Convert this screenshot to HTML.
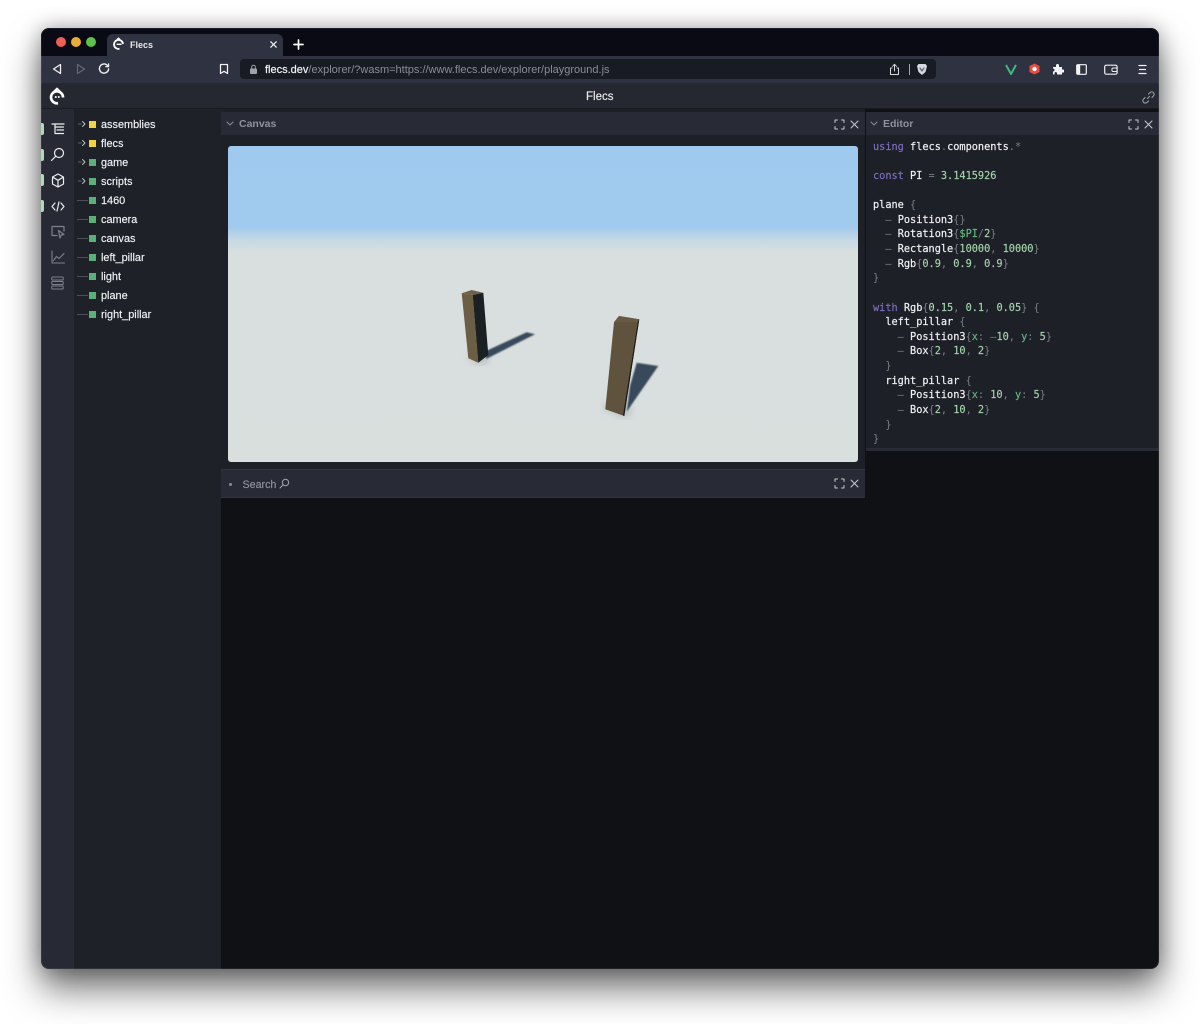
<!DOCTYPE html>
<html><head><meta charset="utf-8"><title>Flecs</title>
<style>
html,body{margin:0;padding:0;width:1200px;height:1024px;overflow:hidden;background:#fff;font-family:"Liberation Sans",sans-serif}
div,span,svg{position:absolute;box-sizing:border-box}
i{font-style:normal}
#win{left:41px;top:28px;width:1118px;height:941px;border-radius:8px;overflow:hidden;background:#101114;}
#shadow{left:41px;top:28px;width:1118px;height:941px;border-radius:8px;box-shadow:0 20px 36px rgba(0,0,0,.55),0 0 20px rgba(0,0,0,.3)}
.t{white-space:nowrap;line-height:14px}
.row{font-size:10.9px;color:#f2f3f5;left:60px;white-space:nowrap;line-height:14px;-webkit-text-stroke:.15px #f2f3f5}
.sq{width:7px;height:7px;left:48px;background:#5bb077}
.sq.y{background:#f4d23f}
.ln{left:36px;width:11px;height:1px;background:#4c4f57}
.code{font-family:"DejaVu Sans Mono","Liberation Mono",monospace;font-size:10.25px;line-height:14.63px;color:#7b7f89;white-space:pre}
.w{color:#f0f1f3;-webkit-text-stroke:.2px #f0f1f3}.p{color:#7f6fc0;-webkit-text-stroke:.15px #7f6fc0}.n{color:#a6d6ae;-webkit-text-stroke:.15px #a6d6ae}.g{color:#63b97d;-webkit-text-stroke:.15px #63b97d}
svg{fill:none;stroke-linecap:round;stroke-linejoin:round}
</style></head><body>
<div id="shadow"></div>
<div id="win">
 <!-- tab strip -->
 <div style="left:0;top:0;width:1118px;height:28px;background:#0a0a15"></div>
 <div style="left:15px;top:9px;width:10px;height:10px;border-radius:5px;background:#ed5f57"></div>
 <div style="left:29.500px;top:9px;width:10px;height:10px;border-radius:5px;background:#e8ac3a"></div>
 <div style="left:44.500px;top:9px;width:10px;height:10px;border-radius:5px;background:#5dc24c"></div>
 <div style="left:66px;top:6px;width:176px;height:22px;background:#2f3240;border-radius:6px 6px 0 0"></div>
 <svg style="left:71px;top:9px" width="13" height="14" viewBox="0 0 13 14"><path d="M11 7A4.500 4.500 0 1 0 7.500 11.800" stroke="#fff" stroke-width="1.800" stroke-linecap="butt"/><path d="M5 7.300H9" stroke="#fff" stroke-width="1.300"/><path d="M5 2.500L6.500 1L8 2.500" stroke="#fff" stroke-width="1.200"/></svg>
 <div class="t" style="left:89px;top:9.500px;font-size:9px;font-weight:bold;color:#e8e9ec">Flecs</div>
 <svg style="left:229px;top:12.500px" width="7" height="7" viewBox="0 0 7 7"><path d="M.8 .8L6.200 6.200M6.200 .8L.8 6.200" stroke="#f2f2f4" stroke-width="1.200"/></svg>
 <svg style="left:252px;top:11px" width="11" height="11" viewBox="0 0 11 11"><path d="M5.500 1V10M1 5.500H10" stroke="#fff" stroke-width="1.700"/></svg>
 <!-- toolbar -->
 <div style="left:0;top:28px;width:1118px;height:27px;background:#2f3240"></div>
 <svg style="left:11px;top:35px" width="10" height="12" viewBox="0 0 10 12"><path d="M8.500 1.500V10.500L1.500 6Z" stroke="#f0f0f2" stroke-width="1.300"/></svg>
 <svg style="left:35px;top:35px" width="10" height="12" viewBox="0 0 10 12"><path d="M1.500 1.500V10.500L8.500 6Z" stroke="#636675" stroke-width="1.200"/></svg>
 <svg style="left:57px;top:35px" width="12" height="12" viewBox="0 0 12 12"><path d="M10 3.200A4.600 4.600 0 1 0 10.600 6" stroke="#f0f0f2" stroke-width="1.400"/><path d="M10.600 .8V3.600H7.800" stroke="#f0f0f2" stroke-width="1.200"/></svg>
 <svg style="left:178px;top:35px" width="10" height="12" viewBox="0 0 10 12"><path d="M1.500 1.500H8.500V10.500L5 8.300L1.500 10.500Z" stroke="#f0f0f2" stroke-width="1.300"/></svg>
 <div style="left:199px;top:31px;width:696px;height:20px;background:#191b24;border-radius:4px"></div>
 <svg style="left:208px;top:35.500px" width="9" height="11" viewBox="0 0 9 11"><rect x="1" y="4.500" width="7" height="5.500" rx="1" fill="#a0a2aa"/><path d="M2.700 4.500V3a1.800 1.800 0 0 1 3.600 0V4.500" stroke="#a0a2aa" stroke-width="1"/></svg>
 <div class="t" style="left:224px;top:34.500px;font-size:11px;color:#8a8d96"><span style="position:static;color:#f2f3f5;-webkit-text-stroke:.2px #f2f3f5">flecs.dev</span>/explorer/?wasm=https://www.flecs.dev/explorer/playground.js</div>
 <svg style="left:848px;top:35px" width="11" height="13" viewBox="0 0 11 13"><path d="M3 5H1.500V11.500H9.500V5H8M5.500 8V1.500M3.500 3.300L5.500 1.300L7.500 3.300" stroke="#d8d9de" stroke-width="1"/></svg>
 <div style="left:868px;top:36px;width:1px;height:11px;background:#a4a6ae"></div>
 <svg style="left:875px;top:34.500px" width="12" height="13" viewBox="0 0 12 13"><path d="M2.500 1H9.500L11 3L9.500 9L6 12L2.500 9L1 3Z" fill="#d8d9e0"/><path d="M4 5L6 8L8 5" stroke="#5d6070" stroke-width="1.200"/></svg>
 <svg style="left:964px;top:36px" width="12" height="11" viewBox="0 0 12 11"><path d="M1 1L6 10L11 1" stroke="#41b883" stroke-width="2" stroke-linecap="butt" stroke-linejoin="miter"/></svg>
 <svg style="left:988px;top:35px" width="11" height="12" viewBox="0 0 11 12"><path d="M5.500 .5L10.500 3V9L5.500 11.500L.5 9V3Z" fill="#ea4c3f"/><circle cx="5.500" cy="6" r="2.200" fill="#fff"/></svg>
 <svg style="left:1011px;top:35px" width="12" height="12" viewBox="0 0 12 12"><path d="M1 4H4V2.500A1.500 1.500 0 0 1 7 2.500V4H10V6.500H11A1.500 1.500 0 0 1 11 9.500H10V11.500H5V10A1.300 1.300 0 0 0 2.500 10V11.500H1V8.500A1.500 1.500 0 0 0 1 5.500Z" fill="#f4f4f6"/></svg>
 <svg style="left:1035px;top:36px" width="11" height="11" viewBox="0 0 11 11"><rect x=".7" y=".7" width="9.600" height="9.600" rx="1" stroke="#f4f4f6" stroke-width="1.200"/><rect x="1" y="1" width="3.200" height="9" fill="#f4f4f6"/></svg>
 <svg style="left:1063px;top:36px" width="14" height="11" viewBox="0 0 14 11"><rect x=".7" y="1.200" width="12.400" height="9" rx="1.500" stroke="#f0f0f2" stroke-width="1.200"/><rect x="8" y="4" width="5" height="3.500" rx="1" fill="#2f3240" stroke="#f0f0f2"/></svg>
 <svg style="left:1097px;top:36px" width="9" height="11" viewBox="0 0 9 11"><path d="M1 1.500H8M1.500 5.500H7.500M1 9.500H8" stroke="#f0f0f2" stroke-width="1.300"/></svg>
 <!-- app header -->
 <div style="left:0;top:55px;width:1118px;height:26px;background:#252831;border-bottom:1px solid #1a1c22"></div>
 <svg style="left:8px;top:59px" width="17" height="18" viewBox="0 0 17 18"><path d="M14 10.500A6 6 0 1 0 9 16.200" stroke="#fff" stroke-width="2.600" stroke-linecap="butt"/><path d="M5 4.500L8 1.500L11 4.500" stroke="#fff" stroke-width="1.800"/><circle cx="6.800" cy="10" r="1" fill="#fff"/><circle cx="9.800" cy="10" r="1" fill="#fff"/></svg>
 <div class="t" style="left:545px;top:61.500px;font-size:11.500px;color:#eceded;-webkit-text-stroke:.15px #eceded">Flecs</div>
 <svg style="left:1101px;top:63px" width="13" height="13" viewBox="0 0 13 13"><path d="M5.500 7.500L7.500 5.500M6.500 3L8 1.600A2.400 2.400 0 0 1 11.400 5L10 6.500M6.500 10L5 11.400A2.400 2.400 0 0 1 1.600 8L3 6.500" stroke="#9c9fa8" stroke-width="1.100"/></svg>
 <!-- sidebar -->
 <div style="left:0;top:81px;width:33px;height:860px;background:#272a34"></div>
 <div style="left:33px;top:81px;width:147px;height:860px;background:#1e2128"></div>
 <div style="left:0;top:95px;width:3px;height:12px;background:#a7dcb4;border-radius:0 2px 2px 0"></div>
 <div style="left:0;top:121px;width:3px;height:12px;background:#a7dcb4;border-radius:0 2px 2px 0"></div>
 <div style="left:0;top:146px;width:3px;height:12px;background:#a7dcb4;border-radius:0 2px 2px 0"></div>
 <div style="left:0;top:172px;width:3px;height:12px;background:#a7dcb4;border-radius:0 2px 2px 0"></div>
 <svg style="left:10px;top:94px" width="14" height="14" viewBox="0 0 14 14"><path d="M1 2H13M4 5H12.500M6 8H12.500M4 11.500H12.500M4 2V11.500" stroke="#eceded" stroke-width="1.200"/></svg>
 <svg style="left:9px;top:119px" width="15" height="15" viewBox="0 0 15 15"><circle cx="9" cy="6" r="4.500" stroke="#eceded" stroke-width="1.200"/><path d="M5.800 9.200L1.500 13.500" stroke="#eceded" stroke-width="1.200"/></svg>
 <svg style="left:10px;top:145px" width="14" height="15" viewBox="0 0 14 15"><path d="M7 1L12.500 4V11L7 14L1.500 11V4ZM1.500 4L7 7.300L12.500 4M7 7.300V14" stroke="#eceded" stroke-width="1.200"/></svg>
 <svg style="left:10px;top:173px" width="14" height="11" viewBox="0 0 14 11"><path d="M4 2L1 5.500L4 9M10 2L13 5.500L10 9M8 1L6 10" stroke="#eceded" stroke-width="1.200"/></svg>
 <svg style="left:10px;top:197px" width="14" height="14" viewBox="0 0 14 14"><path d="M6 10.500H1V1.500H13V6" stroke="#7e818a" stroke-width="1.200"/><path d="M7.500 5.500L13 9.500L10.300 10L9 13Z" stroke="#7e818a" stroke-width="1.200"/></svg>
 <svg style="left:10px;top:222px" width="14" height="14" viewBox="0 0 14 14"><path d="M1 1V13H13.500M2.500 10.500L5.500 6.500L8 8.500L13 3.500" stroke="#7e818a" stroke-width="1.100"/></svg>
 <svg style="left:10px;top:248px" width="13" height="14" viewBox="0 0 13 14"><rect x=".8" y="1" width="11.400" height="3" rx=".8" stroke="#7e818a"/><rect x=".8" y="5.500" width="11.400" height="3" rx=".8" stroke="#7e818a"/><rect x=".8" y="10" width="11.400" height="3" rx=".8" stroke="#7e818a"/></svg>
 <!-- tree -->
 <svg style="left:37px;top:92px" width="9" height="8" viewBox="0 0 9 8"><path d="M4.500 1.500L7 4L4.500 6.500" stroke="#c5c6cb" stroke-width=".9"/><path d="M0 4H3.500" stroke="#5b5e66"/></svg>
 <svg style="left:37px;top:111px" width="9" height="8" viewBox="0 0 9 8"><path d="M4.500 1.500L7 4L4.500 6.500" stroke="#c5c6cb" stroke-width=".9"/><path d="M0 4H3.500" stroke="#5b5e66"/></svg>
 <svg style="left:37px;top:130px" width="9" height="8" viewBox="0 0 9 8"><path d="M4.500 1.500L7 4L4.500 6.500" stroke="#c5c6cb" stroke-width=".9"/><path d="M0 4H3.500" stroke="#5b5e66"/></svg>
 <svg style="left:37px;top:149px" width="9" height="8" viewBox="0 0 9 8"><path d="M4.500 1.500L7 4L4.500 6.500" stroke="#c5c6cb" stroke-width=".9"/><path d="M0 4H3.500" stroke="#5b5e66"/></svg>
 <div class="sq y" style="top:93px"></div><div class="row" style="top:90px">assemblies</div>
 <div class="sq y" style="top:112px"></div><div class="row" style="top:109px">flecs</div>
 <div class="sq" style="top:131px"></div><div class="row" style="top:128px">game</div>
 <div class="sq" style="top:150px"></div><div class="row" style="top:147px">scripts</div>
 <div class="ln" style="top:172px"></div><div class="sq" style="top:169px"></div><div class="row" style="top:165.500px">1460</div>
 <div class="ln" style="top:191px"></div><div class="sq" style="top:188px"></div><div class="row" style="top:185px">camera</div>
 <div class="ln" style="top:210px"></div><div class="sq" style="top:207px"></div><div class="row" style="top:204px">canvas</div>
 <div class="ln" style="top:229px"></div><div class="sq" style="top:226px"></div><div class="row" style="top:223px">left_pillar</div>
 <div class="ln" style="top:248px"></div><div class="sq" style="top:245px"></div><div class="row" style="top:242px">light</div>
 <div class="ln" style="top:267px"></div><div class="sq" style="top:264px"></div><div class="row" style="top:261px">plane</div>
 <div class="ln" style="top:286px"></div><div class="sq" style="top:283px"></div><div class="row" style="top:280px">right_pillar</div>
 <!-- canvas panel -->
 <div style="left:180px;top:81px;width:644px;height:364px;background:#1e2027"></div>
 <div style="left:180px;top:84px;width:644px;height:23px;background:#282b35"></div>
 <svg style="left:185px;top:93px" width="8" height="6" viewBox="0 0 8 6"><path d="M1 1L4 4L7 1" stroke="#8c8f98"/></svg>
 <div class="t" style="left:198px;top:89px;font-size:10.500px;font-weight:bold;color:#8f929b">Canvas</div>
 <svg style="left:793px;top:90.500px" width="11" height="11" viewBox="0 0 11 11"><path d="M1 3.500V1H3.500M7.500 1H10V3.500M10 7.500V10H7.500M3.500 10H1V7.500" stroke="#c9cad0"/></svg>
 <svg style="left:809px;top:91.500px" width="9" height="9" viewBox="0 0 9 9"><path d="M1 1L8 8M8 1L1 8" stroke="#c9cad0"/></svg>
 <svg style="left:187px;top:118px;border-radius:3px" width="630" height="316" viewBox="0 0 630 316">
  <defs>
   <linearGradient id="bg" x1="0" y1="0" x2="0" y2="1"><stop offset="0" stop-color="#9fc9ef"/><stop offset=".255" stop-color="#a0caee"/><stop offset=".295" stop-color="#c4d8e4"/><stop offset=".335" stop-color="#d9dfdf"/><stop offset="1" stop-color="#d9dfdd"/></linearGradient>
   <filter id="b1"><feGaussianBlur stdDeviation=".9"/></filter>
   <filter id="b3"><feGaussianBlur stdDeviation="4"/></filter>
  </defs>
  <rect width="630" height="316" fill="url(#bg)"/>
  <path d="M238 210L252 219L262 214L258 206Z" fill="#b5bcbd" filter="url(#b3)"/>
  <path d="M375 262L398 272L405 262L380 255Z" fill="#b5bcbd" filter="url(#b3)"/>
  <path d="M258 205L298.700 186.300L307 188.300L258 213Z" fill="#374a5c" filter="url(#b1)"/>
  <path d="M408.700 216.700L430.300 220L398.700 265.700L402 240Z" fill="#374a5c" filter="url(#b1)"/>
  <path d="M233.700 147.300L244.700 149L250.300 216.700L240.300 212.300Z" fill="#6c5e45"/>
  <path d="M233.700 147.300L243.700 144L255.300 146.700L244.700 149Z" fill="#6f6148"/>
  <path d="M244.700 149L255.300 146.700L260.300 209L250.300 216.700Z" fill="#1b2122"/>
  <path d="M386 176.300L391 170L411.300 173.300L396.300 270L377.300 263.300Z" fill="#5f533e"/>
  <path d="M391 170L411.300 173.300L409.500 176L386 176.300Z" fill="#685a42"/>
  <path d="M411.300 173.300L396.300 270L395 269.500L409.800 176Z" fill="#171a1a"/>
 </svg>
 <!-- search panel -->
 <div style="left:180px;top:441px;width:644px;height:29px;background:#282b35;border-top:1px solid #31343f;border-bottom:1px solid #31343f"></div>
 <div style="left:188px;top:455px;width:3px;height:3px;border-radius:2px;background:#8a8d96"></div>
 <div class="t" style="left:201.500px;top:449.500px;font-size:10.700px;color:#8f929b;-webkit-text-stroke:.15px #8f929b">Search</div>
 <svg style="left:238px;top:450px" width="11" height="11" viewBox="0 0 11 11"><circle cx="6.500" cy="4.500" r="3.200" stroke="#a3a5ad"/><path d="M4 7L1 10" stroke="#a3a5ad"/></svg>
 <svg style="left:793px;top:450px" width="11" height="11" viewBox="0 0 11 11"><path d="M1 3.500V1H3.500M7.500 1H10V3.500M10 7.500V10H7.500M3.500 10H1V7.500" stroke="#c9cad0"/></svg>
 <svg style="left:809px;top:451px" width="9" height="9" viewBox="0 0 9 9"><path d="M1 1L8 8M8 1L1 8" stroke="#c9cad0"/></svg>
 <!-- editor -->
 <div style="left:825px;top:84px;width:293px;height:339px;background:#1e2027;border-bottom:3px solid #282b35"></div>
 <div style="left:825px;top:84px;width:293px;height:23px;background:#282b35"></div>
 <svg style="left:829px;top:93px" width="8" height="6" viewBox="0 0 8 6"><path d="M1 1L4 4L7 1" stroke="#8c8f98"/></svg>
 <div class="t" style="left:842px;top:89px;font-size:10.500px;font-weight:bold;color:#8f929b">Editor</div>
 <svg style="left:1087px;top:90.500px" width="11" height="11" viewBox="0 0 11 11"><path d="M1 3.500V1H3.500M7.500 1H10V3.500M10 7.500V10H7.500M3.500 10H1V7.500" stroke="#c9cad0"/></svg>
 <svg style="left:1103px;top:91.500px" width="9" height="9" viewBox="0 0 9 9"><path d="M1 1L8 8M8 1L1 8" stroke="#c9cad0"/></svg>
 <div class="code" style="left:832px;top:111.700px"><i class="p">using</i> <i class="w">flecs</i>.<i class="w">components</i>.*

<i class="p">const</i> <i class="w">PI</i> = <i class="n">3.1415926</i>

<i class="w">plane</i> {
  – <i class="w">Position3</i>{}
  – <i class="w">Rotation3</i>{<i class="g">$PI</i>/<i class="n">2</i>}
  – <i class="w">Rectangle</i>{<i class="n">10000</i>, <i class="n">10000</i>}
  – <i class="w">Rgb</i>{<i class="n">0.9</i>, <i class="n">0.9</i>, <i class="n">0.9</i>}
}

<i class="p">with</i> <i class="w">Rgb</i>{<i class="n">0.15</i>, <i class="n">0.1</i>, <i class="n">0.05</i>} {
  <i class="w">left_pillar</i> {
    – <i class="w">Position3</i>{<i class="g">x</i>: –<i class="n">10</i>, <i class="g">y</i>: <i class="n">5</i>}
    – <i class="w">Box</i>{<i class="n">2</i>, <i class="n">10</i>, <i class="n">2</i>}
  }
  <i class="w">right_pillar</i> {
    – <i class="w">Position3</i>{<i class="g">x</i>: <i class="n">10</i>, <i class="g">y</i>: <i class="n">5</i>}
    – <i class="w">Box</i>{<i class="n">2</i>, <i class="n">10</i>, <i class="n">2</i>}
  }
}</div>
</div>
<div style="left:41px;top:28px;width:1118px;height:941px;border-radius:8px;box-shadow:inset 0 0 0 1px rgba(255,255,255,.08)"></div>
</body></html>
